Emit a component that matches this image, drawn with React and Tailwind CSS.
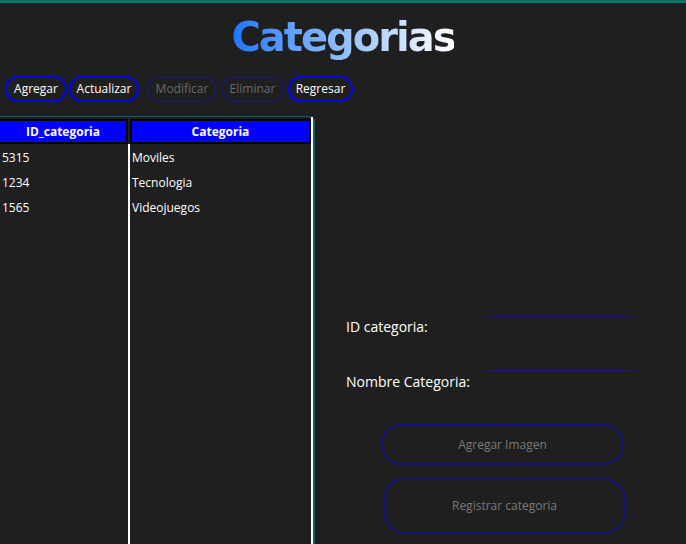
import React from 'react';

const rows = [
  { id: '5315', name: 'Moviles' },
  { id: '1234', name: 'Tecnologia' },
  { id: '1565', name: 'Videojuegos' },
];

const TopButton = ({ label, disabled, w }) => (
  <button
    className={`h-[26px] rounded-full border-2 text-[12px] leading-none ${w} ${
      disabled ? 'border-[#1c1c5c] text-[#6a6a6a]' : 'border-[#0000ff] text-white'
    }`}
  >
    {label}
  </button>
);

const App = () => {
  return (
    <div
      className="w-[686px] h-[544px] overflow-hidden bg-[#1f1f1f] flex flex-col"
      style={{ fontFamily: '"Open Sans", "Noto Sans", sans-serif' }}
    >
      {/* Top bar */}
      <div className="h-[3px] bg-[#007a64]" />

      {/* Title */}
      <div className="h-[70px] flex justify-center pt-[10px]">
        <h1
          className="text-[40px] font-bold leading-[48px] bg-gradient-to-r from-[#1a75ff] to-white bg-clip-text text-transparent"
          style={{ fontFamily: '"DejaVu Sans", sans-serif', letterSpacing: '-2px' }}
        >
          Categorias
        </h1>
      </div>

      {/* Toolbar */}
      <div className="flex items-center pl-[5px] mt-[3px]">
        <TopButton label="Agregar" w="w-[62px]" />
        <div className="w-[2px]" />
        <TopButton label="Actualizar" w="w-[70px]" />
        <div className="w-[8px]" />
        <TopButton label="Modificar" w="w-[70px]" disabled />
        <div className="w-[4px]" />
        <TopButton label="Eliminar" w="w-[63px]" disabled />
        <div className="w-[4px]" />
        <TopButton label="Regresar" w="w-[65px]" />
      </div>

      {/* Main */}
      <div className="flex flex-1 mt-[14px]">
        {/* Table */}
        <div className="w-[315px] h-full border-t border-r-2 border-[#1d5a6a] rounded-tr-[6px]">
          <div className="h-full border-r-2 border-white flex flex-col pt-[2px]">
            <div className="flex h-[25px] text-white text-[12px] font-bold">
              <div className="w-[128px] bg-[#0000ff] border-2 border-black border-l-0 flex items-center justify-center">
                ID_categoria
              </div>
              <div className="w-[2px]" />
              <div className="flex-1 bg-[#0000ff] border-2 border-black flex items-center justify-center">
                Categoria
              </div>
            </div>
            <div className="flex flex-1">
              <div className="w-[128px] pt-[1px] text-white text-[12px]">
                {rows.map((r) => (
                  <div key={r.id} className="h-[25px] flex items-center pl-[2px]">
                    {r.id}
                  </div>
                ))}
              </div>
              <div className="w-[2px] bg-white" />
              <div className="flex-1 pt-[1px] text-white text-[12px]">
                {rows.map((r) => (
                  <div key={r.id} className="h-[25px] flex items-center pl-[2px]">
                    {r.name}
                  </div>
                ))}
              </div>
            </div>
          </div>
        </div>

        {/* Form */}
        <div className="flex-1 pl-[31px] pt-[197px] text-white text-[14px]">
          <div className="flex items-start h-[54px]">
            <span className="w-[137px] pt-[3px]">ID categoria:</span>
            <div className="w-[153px] mt-[3px] border-t border-[#1a1a78]" />
          </div>
          <div className="flex items-start">
            <span className="w-[138px] pt-[4px]">Nombre Categoria:</span>
            <div className="w-[153px] mt-[3px] border-t border-[#1a1a78]" />
          </div>
          <div className="mt-[32px] pl-[35px]">
            <button className="w-[243px] h-[41px] rounded-full border-2 border-[#14147a] text-[#7a7a7a] text-[12px]">
              Agregar Imagen
            </button>
            <button className="mt-[13px] ml-[2px] w-[243px] h-[56px] rounded-[22px] border-2 border-[#14147a] text-[#7a7a7a] text-[12px]">
              Registrar categoria
            </button>
          </div>
        </div>
      </div>
    </div>
  );
};

export default App;
